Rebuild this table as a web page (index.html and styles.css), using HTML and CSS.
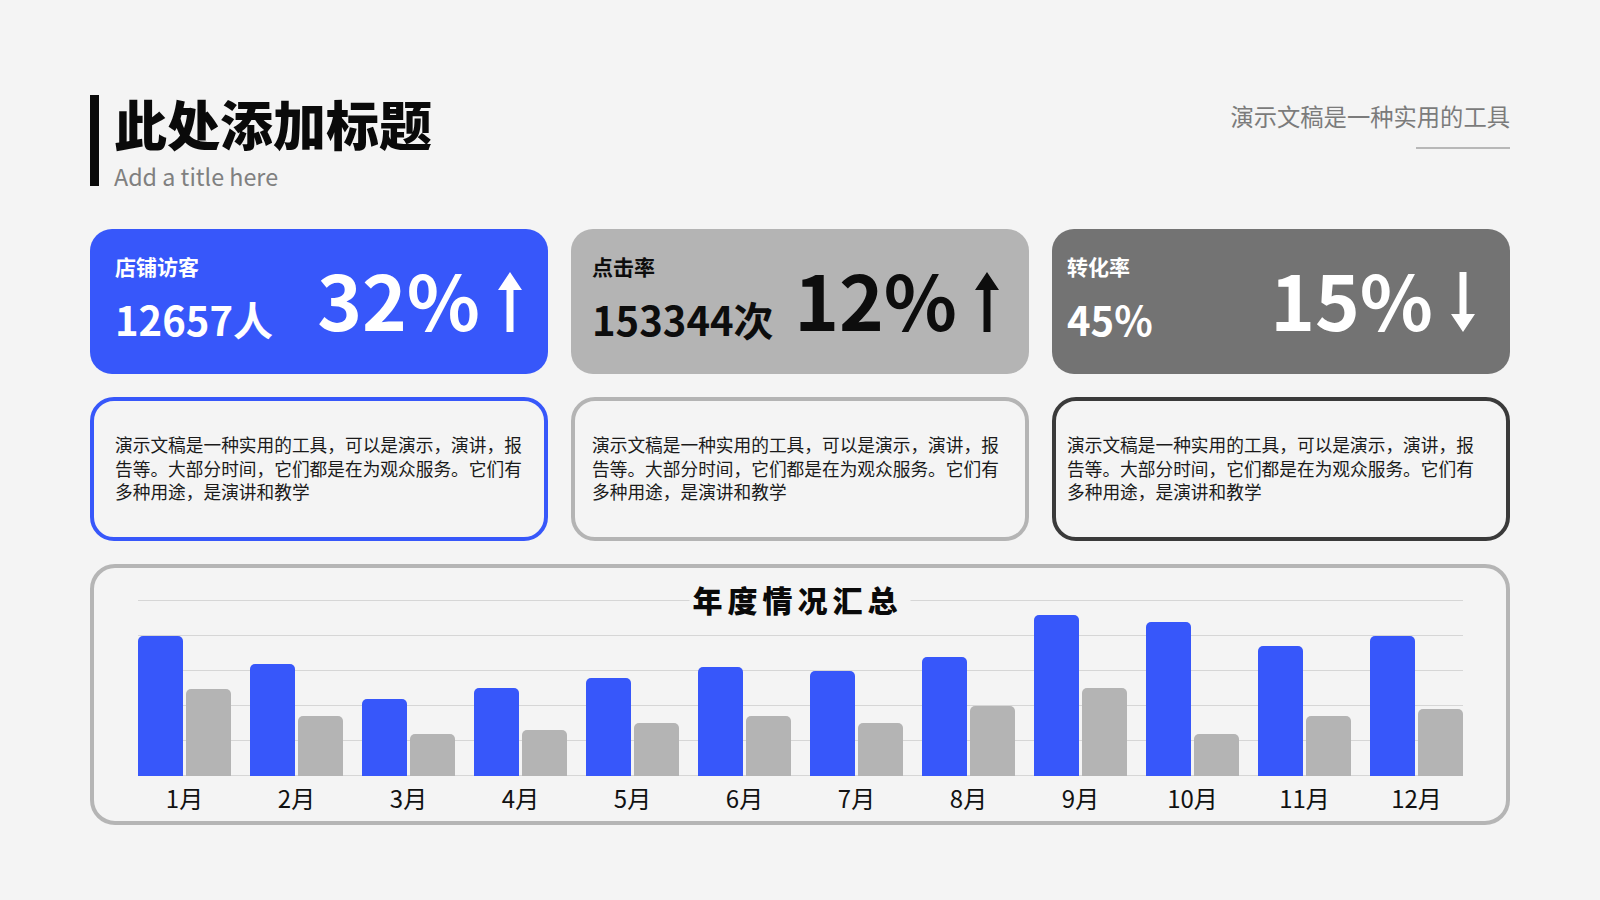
FILE: index.html
```html
<!DOCTYPE html>
<html lang="zh-CN">
<head>
<meta charset="utf-8">
<title>此处添加标题</title>
<link rel="stylesheet" href="styles.css">
</head>
<body>
<div class="slide">
  <header class="header">
    <div class="title-block">
      <div class="title-bar"></div>
      <div class="title-text">
        <h1 class="title">此处添加标题</h1>
        <p class="subtitle">Add a title here</p>
      </div>
    </div>
    <div class="tagline">
      <p class="tagline-text">演示文稿是一种实用的工具</p>
      <div class="tagline-rule"></div>
    </div>
  </header>

  <section class="stats">
    <div class="stat stat--blue">
      <div class="stat-left">
        <div class="stat-label">店铺访客</div>
        <div class="stat-value">12657人</div>
      </div>
      <div class="stat-right">
        <span class="stat-big">32%</span>
        <svg class="arrow" viewBox="0 0 24 60"><path d="M12 0 L24 18 L15.5 18 L15.5 60 L8.5 60 L8.5 18 L0 18 Z"/></svg>
      </div>
    </div>
    <div class="stat stat--gray">
      <div class="stat-left">
        <div class="stat-label">点击率</div>
        <div class="stat-value">153344次</div>
      </div>
      <div class="stat-right">
        <span class="stat-big">12%</span>
        <svg class="arrow" viewBox="0 0 24 60"><path d="M12 0 L24 18 L15.5 18 L15.5 60 L8.5 60 L8.5 18 L0 18 Z"/></svg>
      </div>
    </div>
    <div class="stat stat--dark">
      <div class="stat-left">
        <div class="stat-label">转化率</div>
        <div class="stat-value">45%</div>
      </div>
      <div class="stat-right">
        <span class="stat-big">15%</span>
        <svg class="arrow" viewBox="0 0 24 60"><path d="M8.5 0 L15.5 0 L15.5 42 L24 42 L12 60 L0 42 L8.5 42 Z"/></svg>
      </div>
    </div>
  </section>

  <section class="descs">
    <div class="desc desc--blue"><p>演示文稿是一种实用的工具，可以是演示，演讲，报告等。大部分时间，它们都是在为观众服务。它们有多种用途，是演讲和教学</p></div>
    <div class="desc desc--gray"><p>演示文稿是一种实用的工具，可以是演示，演讲，报告等。大部分时间，它们都是在为观众服务。它们有多种用途，是演讲和教学</p></div>
    <div class="desc desc--dark"><p>演示文稿是一种实用的工具，可以是演示，演讲，报告等。大部分时间，它们都是在为观众服务。它们有多种用途，是演讲和教学</p></div>
  </section>

  <section class="chart">
    <div class="chart-title">年度情况汇总</div>
    <div class="plot">
      <div class="group"><div class="bar bar--a" style="height:140px"></div><div class="bar bar--b" style="height:87px"></div></div>
      <div class="group"><div class="bar bar--a" style="height:112px"></div><div class="bar bar--b" style="height:60px"></div></div>
      <div class="group"><div class="bar bar--a" style="height:77px"></div><div class="bar bar--b" style="height:42px"></div></div>
      <div class="group"><div class="bar bar--a" style="height:88px"></div><div class="bar bar--b" style="height:46px"></div></div>
      <div class="group"><div class="bar bar--a" style="height:98px"></div><div class="bar bar--b" style="height:53px"></div></div>
      <div class="group"><div class="bar bar--a" style="height:109px"></div><div class="bar bar--b" style="height:60px"></div></div>
      <div class="group"><div class="bar bar--a" style="height:105px"></div><div class="bar bar--b" style="height:53px"></div></div>
      <div class="group"><div class="bar bar--a" style="height:119px"></div><div class="bar bar--b" style="height:70px"></div></div>
      <div class="group"><div class="bar bar--a" style="height:161px"></div><div class="bar bar--b" style="height:88px"></div></div>
      <div class="group"><div class="bar bar--a" style="height:154px"></div><div class="bar bar--b" style="height:42px"></div></div>
      <div class="group"><div class="bar bar--a" style="height:130px"></div><div class="bar bar--b" style="height:60px"></div></div>
      <div class="group"><div class="bar bar--a" style="height:140px"></div><div class="bar bar--b" style="height:67px"></div></div>
    </div>
    <div class="labels">
      <span class="label">1月</span><span class="label">2月</span><span class="label">3月</span><span class="label">4月</span>
      <span class="label">5月</span><span class="label">6月</span><span class="label">7月</span><span class="label">8月</span>
      <span class="label">9月</span><span class="label">10月</span><span class="label">11月</span><span class="label">12月</span>
    </div>
  </section>
</div>
</body>
</html>
```

FILE: styles.css
```css
* {
  box-sizing: border-box;
  margin: 0;
  padding: 0;
}

html,
body {
  width: 1600px;
  height: 900px;
  overflow: hidden;
  background: #f4f4f4;
}

body {
  font-family: "Noto Sans CJK SC", "Noto Sans", sans-serif;
  color: #111;
}

.slide {
  padding: 95px 90px 0;
}

/* ---------- header ---------- */
.header {
  height: 95px;
  display: flex;
  justify-content: space-between;
  align-items: flex-start;
}

.title-block {
  display: flex;
  gap: 15px;
}

.title-bar {
  width: 9px;
  height: 91px;
  background: #0a0a0a;
}

.title {
  font-size: 53px;
  line-height: 56px;
  font-weight: 900;
  color: #0a0a0a;
}

.subtitle {
  margin-top: 10px;
  font-size: 23.3px;
  line-height: 30px;
  color: #808080;
}

.tagline {
  display: flex;
  flex-direction: column;
  align-items: flex-end;
  margin-top: 6px;
}

.tagline-text {
  font-size: 23.3px;
  line-height: 30px;
  color: #7b7b7b;
}

.tagline-rule {
  width: 94px;
  height: 2px;
  margin-top: 16px;
  background: #b8b8b8;
}

/* ---------- stat cards ---------- */
.stats {
  display: grid;
  grid-template-columns: repeat(3, 1fr);
  gap: 23px;
  margin-top: 39px;
}

.stat {
  height: 145px;
  border-radius: 22px;
  display: flex;
  justify-content: space-between;
  align-items: flex-start;
  padding-top: 24px;
}

.stat--blue {
  background: #3757fa;
  color: #fff;
  padding-left: 25px;
  padding-right: 26px;
}

.stat--gray {
  background: #b4b4b4;
  color: #0d0d0d;
  padding-left: 21px;
  padding-right: 30px;
}

.stat--dark {
  background: #737373;
  color: #fff;
  padding-left: 15px;
  padding-right: 35px;
}

.stat-label {
  font-size: 21px;
  line-height: 26px;
  font-weight: 700;
}

.stat-value {
  margin-top: 16px;
  font-size: 40px;
  line-height: 48px;
  font-weight: 700;
}

.stat-right {
  display: flex;
  align-items: flex-start;
  gap: 18px;
  margin-top: 4px;
}

.stat-big {
  font-size: 76px;
  line-height: 82px;
  font-weight: 700;
}

.arrow {
  width: 24px;
  height: 60px;
  margin-top: 15px;
  fill: currentColor;
}

/* ---------- description cards ---------- */
.descs {
  display: grid;
  grid-template-columns: repeat(3, 1fr);
  gap: 23px;
  margin-top: 23px;
}

.desc {
  height: 144px;
  border: 4px solid #b4b4b4;
  border-radius: 24px;
  padding-top: 32px;
  font-size: 17.7px;
  line-height: 23.5px;
  color: #1a1a1a;
}

.desc p {
  width: 415px;
}

.desc--blue {
  border-color: #3757fa;
  padding-left: 21px;
}

.desc--gray {
  border-color: #b4b4b4;
  padding-left: 17px;
}

.desc--dark {
  border-color: #3a3a3a;
  padding-left: 11px;
}

/* ---------- chart ---------- */
.chart {
  position: relative;
  height: 261px;
  margin-top: 23px;
  border: 4px solid #b5b5b5;
  border-radius: 25px;
  padding: 32px 43px 0 44px;
}

.chart-title {
  position: absolute;
  top: 16px;
  left: 50%;
  transform: translateX(-50%);
  padding: 0 8px 0 3px;
  background: #f4f4f4;
  font-size: 30px;
  line-height: 30px;
  font-weight: 900;
  letter-spacing: 5px;
  white-space: nowrap;
  color: #0a0a0a;
  z-index: 1;
}

.plot {
  height: 176px;
  display: flex;
  justify-content: space-between;
  align-items: flex-end;
  background: repeating-linear-gradient(to bottom, #d6d6d6 0, #d6d6d6 1px, transparent 1px, transparent 35px);
}

.group {
  width: 93px;
  display: flex;
  align-items: flex-end;
  gap: 3px;
}

.bar {
  width: 45px;
  border-radius: 5px 5px 0 0;
}

.bar--a {
  background: #3757fa;
}

.bar--b {
  background: #b4b4b4;
}

.labels {
  display: flex;
  justify-content: space-between;
  margin-top: 7px;
}

.label {
  width: 93px;
  text-align: center;
  font-size: 24px;
  line-height: 30px;
  color: #111;
}
```
